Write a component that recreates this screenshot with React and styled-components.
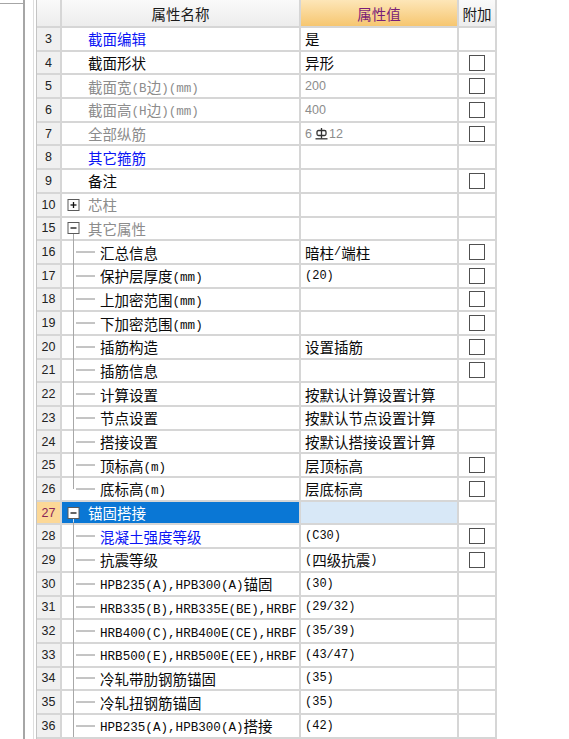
import React from 'react'
import styled, { createGlobalStyle } from 'styled-components'

const GlobalStyle = createGlobalStyle`
  html, body {
    margin: 0;
    padding: 0;
    background: #fff;
  }
  body {
    font-family: "Noto Sans CJK SC", sans-serif;
  }
`

const Frame = styled.div`
  display: flex;
  height: 739px;
  overflow: hidden;
  background: #fff;
`

const LeftPane = styled.div`
  width: 23px;
  flex: none;
  border-right: 2px solid #a6a6a6;
  &::before {
    content: '';
    display: block;
    margin-top: 3px;
    height: 1px;
    background: #a6a6a6;
  }
`

const Gutter = styled.div`
  width: 8px;
  flex: none;
  margin-right: 2px;
  border-right: 1px solid #dedede;
`

const Grid = styled.div`
  width: 461px;
  flex: none;
  align-self: flex-start;
  border-left: 1px solid #c4c4c4;
  display: grid;
  grid-template-columns: 25px 239px 158px 38px;
  grid-template-rows: 28px;
  grid-auto-rows: 23.7px;
`

const Cell = styled.div`
  box-sizing: border-box;
  display: flex;
  align-items: center;
  border-right: 2px solid #d6d6d6;
  border-bottom: 2px solid #d6d6d6;
  white-space: nowrap;
  min-width: 0;
`

const HeadCell = styled(Cell)`
  justify-content: center;
  font-size: 14.5px;
  color: ${p => (p.$tone === 'orange' ? '#7a1f78' : '#1a1a1a')};
  background: ${p =>
    p.$tone === 'orange'
      ? 'linear-gradient(#fde6b8, #f6c670)'
      : 'linear-gradient(#fafafa, #ededed)'};
`

const NumCell = styled(Cell)`
  justify-content: center;
  font-family: "Liberation Sans", sans-serif;
  font-size: 12.5px;
  color: ${p => (p.$selected ? '#8a2457' : '#222')};
  background: ${p => (p.$selected ? '#fcd897' : '#f0f0f0')};
`

const NameCell = styled(Cell)`
  padding-left: ${p => p.$indent}px;
  font-size: 14.5px;
  color: ${p => p.$color};
  background: ${p => (p.$selected ? '#0a77d5' : '#fff')};
`

const ValueCell = styled(Cell)`
  padding-left: 4px;
  overflow: hidden;
  font-size: 14.5px;
  color: ${p => p.$color};
  background: ${p => (p.$selected ? '#d8e8f7' : '#fff')};
`

const ExtraCell = styled(Cell)`
  justify-content: center;
  background: #fff;
`

const Label = styled.span`
  flex: 1;
  min-width: 0;
  overflow: hidden;
`

const Latin = styled.span`
  font-family: "Liberation Mono", monospace;
  font-size: ${p => p.$size}px;
  vertical-align: 1px;
`

const Digits = styled.span`
  font-family: "Liberation Sans", sans-serif;
  font-size: 12.5px;
  color: #8c8c8c;
  display: inline-flex;
  align-items: center;
`

const Check = styled.span`
  box-sizing: border-box;
  width: 16px;
  height: 16px;
  border: 1.5px solid #505050;
  background: #fff;
`

const TreeSvg = styled.svg`
  flex: none;
  overflow: visible;
`

const COLORS = {
  black: '#0a0a0a',
  blue: '#0a14f5',
  gray: '#8c8c8c',
}

const rows = [
  { n: 3, name: '截面编辑', color: 'blue', value: '是' },
  { n: 4, name: '截面形状', value: '异形', check: true },
  { n: 5, name: '截面宽(B边)(mm)', color: 'gray', value: '200', digits: true, check: true },
  { n: 6, name: '截面高(H边)(mm)', color: 'gray', value: '400', digits: true, check: true },
  { n: 7, name: '全部纵筋', color: 'gray', rebar: true, check: true },
  { n: 8, name: '其它箍筋', color: 'blue' },
  { n: 9, name: '备注', check: true },
  { n: 10, name: '芯柱', color: 'gray', tree: 'plus' },
  { n: 15, name: '其它属性', color: 'gray', tree: 'minus' },
  { n: 16, name: '汇总信息', value: '暗柱/端柱', check: true, tree: 'child' },
  { n: 17, name: '保护层厚度(mm)', value: '(20)', check: true, tree: 'child' },
  { n: 18, name: '上加密范围(mm)', check: true, tree: 'child' },
  { n: 19, name: '下加密范围(mm)', check: true, tree: 'child' },
  { n: 20, name: '插筋构造', value: '设置插筋', check: true, tree: 'child' },
  { n: 21, name: '插筋信息', check: true, tree: 'child' },
  { n: 22, name: '计算设置', value: '按默认计算设置计算', tree: 'child' },
  { n: 23, name: '节点设置', value: '按默认节点设置计算', tree: 'child' },
  { n: 24, name: '搭接设置', value: '按默认搭接设置计算', tree: 'child' },
  { n: 25, name: '顶标高(m)', value: '层顶标高', check: true, tree: 'child' },
  { n: 26, name: '底标高(m)', value: '层底标高', check: true, tree: 'last' },
  { n: 27, name: '锚固搭接', tree: 'minus', selected: true },
  { n: 28, name: '混凝土强度等级', color: 'blue', value: '(C30)', check: true, tree: 'child' },
  { n: 29, name: '抗震等级', value: '(四级抗震)', check: true, tree: 'child' },
  { n: 30, name: 'HPB235(A),HPB300(A)锚固', value: '(30)', tree: 'child' },
  { n: 31, name: 'HRB335(B),HRB335E(BE),HRBF', value: '(29/32)', tree: 'child' },
  { n: 32, name: 'HRB400(C),HRB400E(CE),HRBF', value: '(35/39)', tree: 'child' },
  { n: 33, name: 'HRB500(E),HRB500E(EE),HRBF', value: '(43/47)', tree: 'child' },
  { n: 34, name: '冷轧带肋钢筋锚固', value: '(35)', tree: 'child' },
  { n: 35, name: '冷轧扭钢筋锚固', value: '(35)', tree: 'child' },
  { n: 36, name: 'HPB235(A),HPB300(A)搭接', value: '(42)', tree: 'child' },
]

// split ascii runs out so they get the narrow mono face
const Mixed = ({ text, size }) =>
  text
    .split(/([\x00-\x7f]+)/)
    .filter(Boolean)
    .map((part, i) =>
      /^[\x00-\x7f]+$/.test(part) ? (
        <Latin key={i} $size={size}>{part}</Latin>
      ) : (
        <span key={i}>{part}</span>
      )
    )

const TreeMark = ({ kind, selected }) => {
  const line = selected ? '#cfe2f6' : '#a8a8a8'
  if (kind === 'plus' || kind === 'minus') {
    return (
      <TreeSvg width='26' height='22' viewBox='0 0 26 22'>
        {kind === 'minus' && <line x1='11.5' y1='17' x2='11.5' y2='22' stroke={line} />}
        <rect x='6' y='5.5' width='11' height='11' fill='#fff' stroke='#5a5a5a' />
        <line x1='8.5' y1='11' x2='14.5' y2='11' stroke='#111' strokeWidth='1.3' />
        {kind === 'plus' && <line x1='11.5' y1='8' x2='11.5' y2='14' stroke='#111' strokeWidth='1.3' />}
      </TreeSvg>
    )
  }
  return (
    <TreeSvg width='38' height='22' viewBox='0 0 38 22'>
      <line x1='11.5' y1='-3' x2='11.5' y2={kind === 'last' ? 11 : 22} stroke={line} />
      <line x1='14' y1='11' x2='33' y2='11' stroke='#8a8a8a' />
    </TreeSvg>
  )
}

const RebarMark = () => (
  <svg width='13' height='12' viewBox='0 0 13 12' style={{ margin: '0 1px 0 3px' }}>
    <rect x='2' y='2.5' width='9' height='5' rx='1.5' fill='none' stroke='#333' strokeWidth='1.3' />
    <line x1='6.5' y1='0' x2='6.5' y2='10.5' stroke='#333' strokeWidth='1.3' />
    <line x1='0.5' y1='10.8' x2='12.5' y2='10.8' stroke='#333' strokeWidth='1.3' />
  </svg>
)

const renderValue = row => {
  if (row.rebar) {
    return (
      <Digits>
        6<RebarMark />12
      </Digits>
    )
  }
  if (!row.value) return null
  if (row.digits) return <Digits>{row.value}</Digits>
  return <Mixed text={row.value} size={12} />
}

const PropertyRow = ({ row }) => {
  const indent = row.tree ? 0 : 26
  const color = row.selected ? '#fff' : COLORS[row.color || 'black']
  return (
    <>
      <NumCell $selected={row.selected}>{row.n}</NumCell>
      <NameCell $indent={indent} $color={color} $selected={row.selected}>
        {row.tree && <TreeMark kind={row.tree} selected={row.selected} />}
        <Label>
          <Mixed text={row.name} size={12.6} />
        </Label>
      </NameCell>
      <ValueCell $color={COLORS.black} $selected={row.selected}>
        {renderValue(row)}
      </ValueCell>
      <ExtraCell>{row.check && <Check />}</ExtraCell>
    </>
  )
}

export default function App() {
  return (
    <>
      <GlobalStyle />
      <Frame>
        <LeftPane />
        <Gutter />
        <Grid>
          <HeadCell />
          <HeadCell>属性名称</HeadCell>
          <HeadCell $tone='orange'>属性值</HeadCell>
          <HeadCell>附加</HeadCell>
          {rows.map(row => (
            <PropertyRow key={row.n} row={row} />
          ))}
        </Grid>
      </Frame>
    </>
  )
}
